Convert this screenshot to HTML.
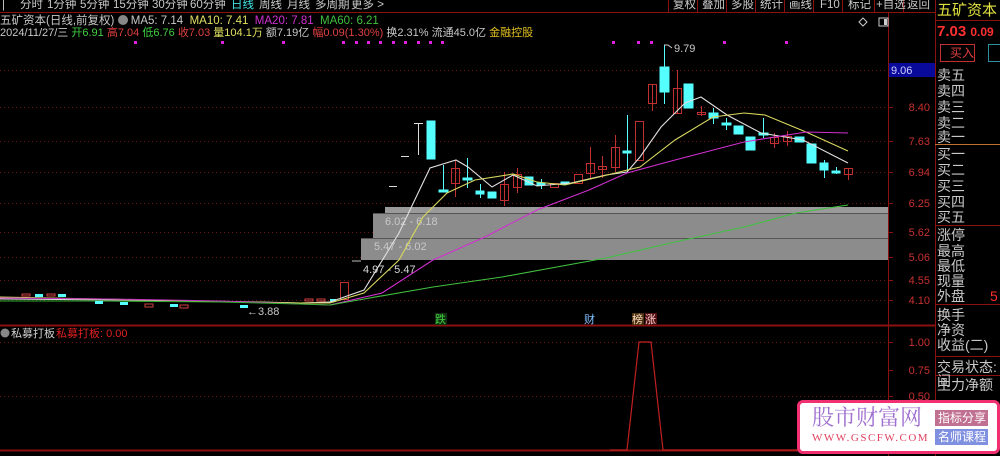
<!DOCTYPE html>
<html><head><meta charset="utf-8"><style>
*{margin:0;padding:0;box-sizing:border-box}
body{width:1000px;height:456px;background:#000;overflow:hidden;position:relative;font-family:"Liberation Sans","Noto Sans CJK SC",sans-serif;font-size:12px;color:#c8c8c8}
.a{position:absolute;white-space:nowrap;line-height:1}
.t{position:absolute;top:0;font-size:11.5px;color:#c8c8c8;line-height:1;white-space:nowrap}
.rp div{position:absolute;left:937px;font-size:14px;color:#c8c8c8;line-height:1}
</style></head><body>
<svg width="1000" height="456" style="position:absolute;left:0;top:0" font-family="Liberation Sans, Noto Sans CJK SC, sans-serif">
<line x1="0" y1="12.5" x2="935" y2="12.5" stroke="#8b1010"/>
<line x1="888.5" y1="13" x2="888.5" y2="456" stroke="#8b1010"/>
<line x1="935.5" y1="0" x2="935.5" y2="456" stroke="#8b1010"/>
<line x1="0" y1="325.5" x2="935" y2="325.5" stroke="#8b1010" stroke-width="2"/>
<line x1="0" y1="450.5" x2="935" y2="450.5" stroke="#8b1010" stroke-width="2"/>
<g stroke="#8b1010"><line x1="668.5" y1="0" x2="668.5" y2="12"/><line x1="697.5" y1="0" x2="697.5" y2="12"/><line x1="726.5" y1="0" x2="726.5" y2="12"/><line x1="755.5" y1="0" x2="755.5" y2="12"/><line x1="784.5" y1="0" x2="784.5" y2="12"/><line x1="813.5" y1="0" x2="813.5" y2="12"/><line x1="842.5" y1="0" x2="842.5" y2="12"/><line x1="874.5" y1="0" x2="874.5" y2="12"/><line x1="903.5" y1="0" x2="903.5" y2="12"/></g>
<g stroke="#6a1515" stroke-dasharray="1,3">
<line x1="0" y1="70.5" x2="888" y2="70.5"/><line x1="0" y1="107.5" x2="888" y2="107.5"/><line x1="0" y1="141.5" x2="888" y2="141.5"/><line x1="0" y1="172.5" x2="888" y2="172.5"/><line x1="0" y1="203.5" x2="888" y2="203.5"/><line x1="0" y1="232.5" x2="888" y2="232.5"/><line x1="0" y1="257.5" x2="888" y2="257.5"/><line x1="0" y1="280.5" x2="888" y2="280.5"/><line x1="0" y1="300.5" x2="888" y2="300.5"/>
<line x1="0" y1="342.5" x2="888" y2="342.5"/><line x1="0" y1="396.5" x2="888" y2="396.5"/>
</g>
<g stroke="#8b1010"><line x1="888" y1="107.5" x2="893" y2="107.5"/><line x1="888" y1="141.5" x2="893" y2="141.5"/><line x1="888" y1="172.5" x2="893" y2="172.5"/><line x1="888" y1="203.5" x2="893" y2="203.5"/><line x1="888" y1="232.5" x2="893" y2="232.5"/><line x1="888" y1="257.5" x2="893" y2="257.5"/><line x1="888" y1="280.5" x2="893" y2="280.5"/><line x1="888" y1="300.5" x2="893" y2="300.5"/><line x1="888" y1="342.5" x2="893" y2="342.5"/><line x1="888" y1="370.5" x2="893" y2="370.5"/><line x1="888" y1="396.5" x2="893" y2="396.5"/></g>
<rect x="889" y="63" width="46" height="14" fill="#0a0a9a"/>
<text x="891" y="74" font-size="11" fill="#d0d0ff">9.06</text>
<g font-size="11" fill="#c83030" text-anchor="end">
<text x="930" y="111">8.40</text><text x="930" y="145">7.63</text><text x="930" y="176">6.94</text><text x="930" y="207">6.25</text><text x="930" y="236">5.62</text><text x="930" y="261">5.06</text><text x="930" y="284">4.55</text><text x="930" y="304">4.10</text><text x="930" y="346">1.00</text><text x="930" y="374">0.75</text><text x="930" y="400">0.50</text>
</g>
<g fill="#e020e0"><rect x="134" y="41" width="3" height="3"/><rect x="221" y="41" width="3" height="3"/><rect x="282" y="41" width="3" height="3"/><rect x="342" y="41" width="3" height="3"/><rect x="355" y="41" width="3" height="3"/><rect x="367" y="41" width="3" height="3"/><rect x="379" y="41" width="3" height="3"/><rect x="392" y="41" width="3" height="3"/><rect x="404" y="41" width="3" height="3"/><rect x="417" y="41" width="3" height="3"/><rect x="429" y="41" width="3" height="3"/><rect x="441" y="41" width="3" height="3"/><rect x="612" y="41" width="3" height="3"/><rect x="637" y="41" width="3" height="3"/><rect x="650" y="41" width="3" height="3"/><rect x="723" y="41" width="3" height="3"/><rect x="785" y="41" width="3" height="3"/></g>
<rect x="385" y="207" width="503" height="6" fill="#9a9a9a"/>
<rect x="373" y="214" width="515" height="24" fill="#8c8c8c"/>
<rect x="361" y="239" width="527" height="21" fill="#8c8c8c"/>
<line x1="352" y1="261" x2="361" y2="261" stroke="#bbb"/>
<line x1="373" y1="213.5" x2="888" y2="213.5" stroke="#555"/>
<line x1="361" y1="238.5" x2="888" y2="238.5" stroke="#555"/>
<text x="385" y="225" font-size="11" fill="#c8c8c8">6.02 - 6.18</text>
<text x="374" y="250" font-size="11" fill="#c8c8c8">5.47 - 6.02</text>
<text x="363" y="273" font-size="11" fill="#d8d8d8">4.97 - 5.47</text>
<g stroke-width="1" fill="none">
<polyline points="0,299 120,300 200,301 260,302 300,303 330,302" stroke="#ddd"/>
<polyline points="0,297 100,299 200,301 300,303 330,303" stroke="#d8d860"/>
<polyline points="0,298 110,299 220,301 300,304 330,305" stroke="#c030c0"/>
<polyline points="0,301 100,301 220,302 300,304 330,305" stroke="#30b030"/>
</g>
<g fill="#5ff"><rect x="35" y="294" width="8" height="3"/><rect x="58" y="294" width="8" height="3"/><rect x="95" y="301" width="8" height="3"/><rect x="120" y="302" width="8" height="3"/><rect x="170" y="304" width="8" height="3"/><rect x="240" y="305" width="8" height="3"/><rect x="330" y="299" width="6" height="3"/></g>
<g fill="none" stroke="#d04040"><rect x="22" y="294" width="8" height="2"/><rect x="47" y="294" width="8" height="2"/><rect x="145" y="304" width="8" height="3"/><rect x="180" y="305" width="8" height="3"/><rect x="305" y="299" width="8" height="2"/><rect x="317" y="299" width="8" height="2"/></g>
<text x="247" y="315" font-size="11" fill="#c8c8c8">←3.88</text>
<g fill="#55ffff" stroke="#55ffff">
<line x1="418.5" y1="123" x2="418.5" y2="155" stroke="#ddd"/><line x1="414" y1="123.5" x2="423" y2="123.5" stroke="#ddd"/>
<rect x="427" y="121" width="8" height="38"/>
<line x1="443.5" y1="165" x2="443.5" y2="191"/><rect x="439" y="190" width="9" height="2"/>
<line x1="467.5" y1="158" x2="467.5" y2="188"/><rect x="463" y="178" width="9" height="2"/>
<line x1="480.5" y1="184" x2="480.5" y2="198"/><rect x="476" y="191" width="8" height="3"/>
<rect x="488" y="192" width="8" height="6"/>
<rect x="525" y="177" width="8" height="8"/>
<line x1="541.5" y1="179" x2="541.5" y2="189"/><rect x="537" y="183" width="8" height="2"/>
<rect x="561" y="182" width="8" height="2"/>
<line x1="627.5" y1="115" x2="627.5" y2="172"/><rect x="623" y="151" width="8" height="2"/>
<line x1="664.5" y1="45" x2="664.5" y2="104"/><rect x="660" y="67" width="9" height="25"/>
<rect x="684" y="84" width="9" height="24"/>
<line x1="713.5" y1="108" x2="713.5" y2="124"/><rect x="709" y="113" width="9" height="5"/>
<line x1="726.5" y1="118" x2="726.5" y2="130"/><rect x="722" y="123" width="9" height="2"/>
<rect x="734" y="126" width="9" height="8"/>
<rect x="746" y="137" width="9" height="13"/>
<line x1="763.5" y1="118" x2="763.5" y2="138"/><rect x="759" y="133" width="9" height="2"/>
<rect x="795" y="137" width="9" height="5"/>
<rect x="807" y="144" width="9" height="19"/>
<line x1="824.5" y1="160" x2="824.5" y2="178"/><rect x="820" y="163" width="8" height="7"/>
<line x1="836.5" y1="167" x2="836.5" y2="174"/><rect x="832" y="171" width="8" height="2"/>
</g>
<g stroke="#ddd"><line x1="389" y1="186.5" x2="397" y2="186.5"/><line x1="401" y1="156.5" x2="409" y2="156.5"/></g>
<g fill="none" stroke="#c03030">
<rect x="340.5" y="282.5" width="8" height="17"/>
<line x1="455.5" y1="160" x2="455.5" y2="197"/><rect x="451.5" y="168.5" width="8" height="15"/>
<line x1="504.5" y1="172" x2="504.5" y2="206"/><rect x="500.5" y="184.5" width="8" height="16"/>
<line x1="517.5" y1="168" x2="517.5" y2="193"/><rect x="513.5" y="174.5" width="8" height="13"/>
<rect x="550.5" y="183.5" width="8" height="4"/>
<rect x="574.5" y="174.5" width="8" height="9"/>
<line x1="590.5" y1="147" x2="590.5" y2="178"/><rect x="586.5" y="163.5" width="8" height="10"/>
<line x1="602.5" y1="156" x2="602.5" y2="178"/><rect x="598.5" y="166.5" width="8" height="3"/>
<line x1="615.5" y1="135" x2="615.5" y2="172"/><rect x="611.5" y="147.5" width="8" height="20"/>
<rect x="635.5" y="121.5" width="8" height="39"/>
<line x1="652.5" y1="84" x2="652.5" y2="111"/><rect x="648.5" y="84.5" width="8" height="19"/>
<line x1="677.5" y1="70" x2="677.5" y2="113"/><rect x="673.5" y="88.5" width="8" height="25"/>
<line x1="701.5" y1="106" x2="701.5" y2="116"/><rect x="697.5" y="112.5" width="8" height="2"/>
<line x1="774.5" y1="133" x2="774.5" y2="148"/><rect x="770.5" y="137.5" width="8" height="6"/>
<line x1="787.5" y1="131" x2="787.5" y2="146"/><rect x="783.5" y="136.5" width="8" height="5"/>
<line x1="848.5" y1="168" x2="848.5" y2="180"/><rect x="844.5" y="168.5" width="8" height="6"/>
</g>
<g fill="none" stroke-width="1.1">
<polyline points="330,302 364,290 399,233 430,168 456,160 468,167 492,187 513,175 537,186 571,183 606,175 627,172 640,157 661,127 685,103 701,97 727,115 761,133 803,140 848,163" stroke="#e0e0e0"/>
<polyline points="330,303 364,293 399,260 423,217 447,193 475,180 513,174 537,182 565,185 599,177 640,167 675,140 713,117 744,113 765,115 806,132 848,151" stroke="#d8d860"/>
<polyline points="330,305 382,293 433,260 485,237 537,210 589,190 627,173 675,160 744,142 806,132 848,133" stroke="#d030d0"/>
<polyline points="330,305 364,299 433,287 502,277 606,258 675,242 744,227 796,213 848,205" stroke="#40c040"/>
</g>
<polyline points="664,45 668,45 672,48" fill="none" stroke="#ccc"/>
<text x="674" y="52" font-size="11" fill="#c8c8c8">9.79</text>
<rect x="435" y="313" width="12" height="12" fill="#103010"/><text x="435" y="323" font-size="11" fill="#40d040">跌</text>
<text x="584" y="323" font-size="11" fill="#80c0ff">财</text>
<rect x="632" y="313" width="12" height="12" fill="#4a3010"/><text x="632" y="323" font-size="11" fill="#ffe0c0">榜</text>
<rect x="645" y="313" width="12" height="12" fill="#501010"/><text x="645" y="323" font-size="11" fill="#ffd0d0">涨</text>
<polyline points="610,450 627,450 639,342 651,342 663,450 888,450" fill="none" stroke="#c02020" stroke-width="1.2"/>
<circle cx="5" cy="333" r="4.5" fill="#888"/>
<text x="11" y="337" font-size="11" fill="#d0d0d0">私募打板</text>
<text x="56" y="337" font-size="11" fill="#e02020">私募打板: 0.00</text>
<path d="M863 18 l4 4 -4 4 -4 -4z" fill="none" stroke="#ccc"/>
<rect x="879" y="18" width="9" height="8" fill="none" stroke="#ccc"/><rect x="884" y="19" width="3" height="6" fill="#ccc"/>
<line x1="935" y1="144.5" x2="1000" y2="144.5" stroke="#c07030"/>
<line x1="935" y1="225.5" x2="1000" y2="225.5" stroke="#8b1010"/>
<line x1="935" y1="304.5" x2="1000" y2="304.5" stroke="#8b1010"/>
<line x1="935" y1="356.5" x2="1000" y2="356.5" stroke="#8b1010"/>
<line x1="935" y1="375.5" x2="1000" y2="375.5" stroke="#8b1010"/>
<line x1="935" y1="20.5" x2="1000" y2="20.5" stroke="#8b1010"/>
<rect x="940.5" y="44.5" width="34" height="17" fill="none" stroke="#c03030"/>
<rect x="988.5" y="44.5" width="14" height="17" fill="none" stroke="#3090a0"/>
</svg>
<div class="t" style="left:2px">|</div>
<div class="t" style="left:20px">分时</div>
<div class="t" style="left:47px">1分钟</div>
<div class="t" style="left:80px">5分钟</div>
<div class="t" style="left:113px">15分钟</div>
<div class="t" style="left:152px">30分钟</div>
<div class="t" style="left:190px">60分钟</div>
<div class="t" style="left:231px;color:#40e0e0">日线</div>
<div class="t" style="left:259px">周线</div>
<div class="t" style="left:287px">月线</div>
<div class="t" style="left:315px">多周期</div>
<div class="t" style="left:351px">更多 &gt;</div>
<div class="t" style="left:673px">复权</div>
<div class="t" style="left:702px">叠加</div>
<div class="t" style="left:731px">多股</div>
<div class="t" style="left:760px">统计</div>
<div class="t" style="left:789px">画线</div>
<div class="t" style="left:820px">F10</div>
<div class="t" style="left:848px">标记</div>
<div class="t" style="left:876px">+自选</div>
<div class="t" style="left:907px">返回</div>
<div class="a" style="left:0;top:15px;font-size:11.5px;color:#c8c8c8">五矿资本(日线,前复权) <span style="display:inline-block;width:10px;height:10px;border-radius:5px;background:#888;vertical-align:-1px"></span> MA5: 7.14 &nbsp;<span style="color:#e0e060">MA10: 7.41</span> &nbsp;<span style="color:#d030d0">MA20: 7.81</span> &nbsp;<span style="color:#40c040">MA60: 6.21</span></div>
<div class="a" style="left:0;top:28px;font-size:11px;color:#c8c8c8">2024/11/27/三 <span style="color:#40d040">开6.91</span> <span style="color:#e04040">高7.04</span> <span style="color:#40d040">低6.76</span> <span style="color:#e04040">收7.03</span> <span style="color:#e0e060">量104.1万</span> 额7.19亿 <span style="color:#e04040">幅0.09(1.30%)</span> 换2.31% 流通45.0亿 <span style="color:#e0c020">金融控股</span></div>
<div class="a" style="left:937px;top:3px;font-size:15px;color:#e0e040">五矿资本 6</div>
<div class="a" style="left:937px;top:24px;font-size:15px;color:#ff3030;font-weight:bold">7.03 <span style="font-size:12px">0.09</span></div>
<div class="a" style="left:950px;top:47px;font-size:12px;color:#e04040">买入</div>
<div class="rp">
<div style="top:68px">卖五</div><div style="top:84px">卖四</div><div style="top:100px">卖三</div><div style="top:116px">卖二</div><div style="top:130px">卖一</div>
<div style="top:147px">买一</div><div style="top:163px">买二</div><div style="top:179px">买三</div><div style="top:195px">买四</div><div style="top:210px">买五</div>
<div style="top:228px">涨停</div><div style="top:244px">最高</div><div style="top:259px">最低</div><div style="top:274px">现量</div><div style="top:289px">外盘</div>
<div style="top:308px">换手</div><div style="top:323px">净资</div><div style="top:338px">收益(二)</div>
<div style="top:360px">交易状态:间</div><div style="top:378px">主力净额</div>
<div style="top:289px;left:990px;color:#ff3030">5</div>
</div>
<div style="position:absolute;left:797px;top:400px;width:203px;height:54px;background:#fff;border:3px solid #f03070;border-radius:6px"></div>
<div class="a" style="left:812px;top:406px;font-size:22px;color:#a070d0;font-family:'Noto Serif CJK SC',serif">股市财富网</div>
<div class="a" style="left:812px;top:433px;font-size:11px;color:#e04060;font-family:'Liberation Serif',serif;letter-spacing:1.5px">WWW.GSCFW.COM</div>
<div class="a" style="left:935px;top:410px;width:53px;height:16px;background:#c07090;color:#fff;font-size:12px;padding:2px 3px">指标分享</div>
<div class="a" style="left:935px;top:429px;width:53px;height:16px;background:#8090e0;color:#fff;font-size:12px;padding:2px 3px">名师课程</div>
</body></html>
